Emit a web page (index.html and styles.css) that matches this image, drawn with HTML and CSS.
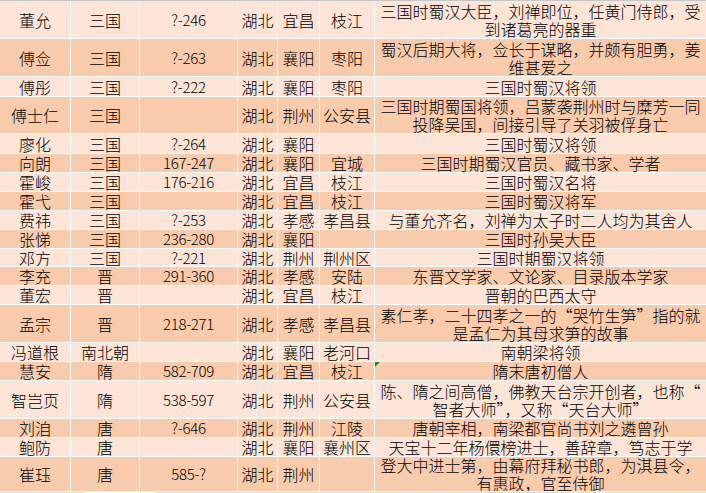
FILE: index.html
```html
<!DOCTYPE html>
<html lang="zh-CN">
<head>
<meta charset="utf-8">
<title>湖北历史人物</title>
<link rel="stylesheet" href="styles.css">
</head>
<body>
<div class="sheet">
  <div class="topline"></div>
  <div class="rows">
    <div class="row h37"><div class="c">董允</div><div class="c">三国</div><div class="c num">?-246</div><div class="c">湖北</div><div class="c">宜昌</div><div class="c">枝江</div><div class="c d">三国时蜀汉大臣，刘禅即位，任黄门侍郎，受<br>到诸葛亮的器重</div></div>
    <div class="row h37"><div class="c">傅佥</div><div class="c">三国</div><div class="c num">?-263</div><div class="c">湖北</div><div class="c">襄阳</div><div class="c">枣阳</div><div class="c d">蜀汉后期大将，佥长于谋略，并颇有胆勇，姜<br>维甚爱之</div></div>
    <div class="row h19"><div class="c">傅彤</div><div class="c">三国</div><div class="c num">?-222</div><div class="c">湖北</div><div class="c">襄阳</div><div class="c">枣阳</div><div class="c d">三国时蜀汉将领</div></div>
    <div class="row h36"><div class="c">傅士仁</div><div class="c">三国</div><div class="c num"></div><div class="c">湖北</div><div class="c">荆州</div><div class="c">公安县</div><div class="c d">三国时期蜀国将领，吕蒙袭荆州时与糜芳一同<br>投降吴国，间接引导了关羽被俘身亡</div></div>
    <div class="row h19"><div class="c">廖化</div><div class="c">三国</div><div class="c num">?-264</div><div class="c">湖北</div><div class="c">襄阳</div><div class="c"></div><div class="c d">三国时蜀汉将领</div></div>
    <div class="row h18"><div class="c">向朗</div><div class="c">三国</div><div class="c num">167-247</div><div class="c">湖北</div><div class="c">襄阳</div><div class="c">宜城</div><div class="c d">三国时期蜀汉官员、藏书家、学者</div></div>
    <div class="row h18"><div class="c">霍峻</div><div class="c">三国</div><div class="c num">176-216</div><div class="c">湖北</div><div class="c">宜昌</div><div class="c">枝江</div><div class="c d">三国时蜀汉名将</div></div>
    <div class="row h18"><div class="c">霍弋</div><div class="c">三国</div><div class="c num"></div><div class="c">湖北</div><div class="c">宜昌</div><div class="c">枝江</div><div class="c d">三国时蜀汉将军</div></div>
    <div class="row h18"><div class="c">费祎</div><div class="c">三国</div><div class="c num">?-253</div><div class="c">湖北</div><div class="c">孝感</div><div class="c">孝昌县</div><div class="c d">与董允齐名，刘禅为太子时二人均为其舍人</div></div>
    <div class="row h18"><div class="c">张悌</div><div class="c">三国</div><div class="c num">236-280</div><div class="c">湖北</div><div class="c">襄阳</div><div class="c"></div><div class="c d">三国时孙吴大臣</div></div>
    <div class="row h17"><div class="c">邓方</div><div class="c">三国</div><div class="c num">?-221</div><div class="c">湖北</div><div class="c">荆州</div><div class="c">荆州区</div><div class="c d">三国时期蜀汉将领</div></div>
    <div class="row h18"><div class="c">李充</div><div class="c">晋</div><div class="c num">291-360</div><div class="c">湖北</div><div class="c">孝感</div><div class="c">安陆</div><div class="c d">东晋文学家、文论家、目录版本学家</div></div>
    <div class="row h18"><div class="c">董宏</div><div class="c">晋</div><div class="c num"></div><div class="c">湖北</div><div class="c">宜昌</div><div class="c">枝江</div><div class="c d">晋朝的巴西太守</div></div>
    <div class="row h37"><div class="c">孟宗</div><div class="c">晋</div><div class="c num">218-271</div><div class="c">湖北</div><div class="c">孝感</div><div class="c">孝昌县</div><div class="c d">素仁孝，二十四孝之一的“哭竹生笋”指的就<br>是孟仁为其母求笋的故事</div></div>
    <div class="row h18"><div class="c">冯道根</div><div class="c">南北朝</div><div class="c num"></div><div class="c">湖北</div><div class="c">襄阳</div><div class="c">老河口</div><div class="c d">南朝梁将领</div></div>
    <div class="row h18"><div class="c">慧安</div><div class="c">隋</div><div class="c num">582-709</div><div class="c">湖北</div><div class="c">宜昌</div><div class="c">枝江</div><div class="c d flagged"><span class="flag"></span>隋末唐初僧人</div></div>
    <div class="row h37"><div class="c">智岂页</div><div class="c">隋</div><div class="c num">538-597</div><div class="c">湖北</div><div class="c">荆州</div><div class="c">公安县</div><div class="c d">陈、隋之间高僧，佛教天台宗开创者，也称“<br>智者大师”，又称“天台大师”</div></div>
    <div class="row h18"><div class="c">刘洎</div><div class="c">唐</div><div class="c num">?-646</div><div class="c">湖北</div><div class="c">荆州</div><div class="c">江陵</div><div class="c d">唐朝宰相，南梁都官尚书刘之遴曾孙</div></div>
    <div class="row h18"><div class="c">鲍防</div><div class="c">唐</div><div class="c num"></div><div class="c">湖北</div><div class="c">襄阳</div><div class="c">襄州区</div><div class="c d">天宝十二年杨儇榜进士，善辞章，笃志于学</div></div>
    <div class="row h34 last"><div class="c">崔珏</div><div class="c">唐</div><div class="c num">585-?</div><div class="c">湖北</div><div class="c">荆州</div><div class="c"></div><div class="c d">登大中进士第，由幕府拜秘书郎，为淇县令，<br>有惠政，官至侍御</div></div>
  </div>
  <div class="tabs"><div class="tab"></div></div>
</div>
</body>
</html>
```

FILE: styles.css
```css
html, body {
  margin: 0;
  padding: 0;
  background: #ffffff;
}

body {
  width: 706px;
  height: 493px;
  overflow: hidden;
  font-family: "Noto Sans CJK SC", "Noto Sans", sans-serif;
  font-size: 16px;
  font-weight: 300;
  color: #000000;
}

.sheet {
  display: flex;
  flex-direction: column;
  height: 493px;
}

.topline {
  height: 1px;
  background: #c6c6c6;
  flex: none;
}

.rows {
  display: flex;
  flex-direction: column;
  flex: none;
}

.row {
  display: grid;
  grid-template-columns: 70px 68px 97px 39px 41px 54px 1fr;
  column-gap: 1px;
  background: #ffffff;
  border-bottom: 1px solid #ffffff;
}

.row.last {
  border-bottom: none;
}

.row:nth-child(odd) .c {
  background: #fce4d6;
}

.row:nth-child(even) .c {
  background: #f8cbad;
}

.h17 { height: 17px; }
.h18 { height: 18px; }
.h19 { height: 19px; }
.h34 { height: 34px; }
.h36 { height: 36px; }
.h37 { height: 37px; }

.c {
  display: flex;
  align-items: center;
  justify-content: center;
  text-align: center;
  white-space: nowrap;
  overflow: hidden;
  line-height: 18px;
}

.num {
  font-size: 15px;
  letter-spacing: -0.3px;
}

.flagged {
  position: relative;
}

.flag {
  position: absolute;
  left: 0;
  top: 0;
  width: 0;
  height: 0;
  border-top: 5px solid #1e8a1e;
  border-right: 5px solid transparent;
}

.tabs {
  flex: 1;
  background: #dcdcdc;
  margin-top: 1px;
  display: flex;
}

.tab {
  margin-left: 85px;
  width: 70px;
  background: #ffffff;
}
```
